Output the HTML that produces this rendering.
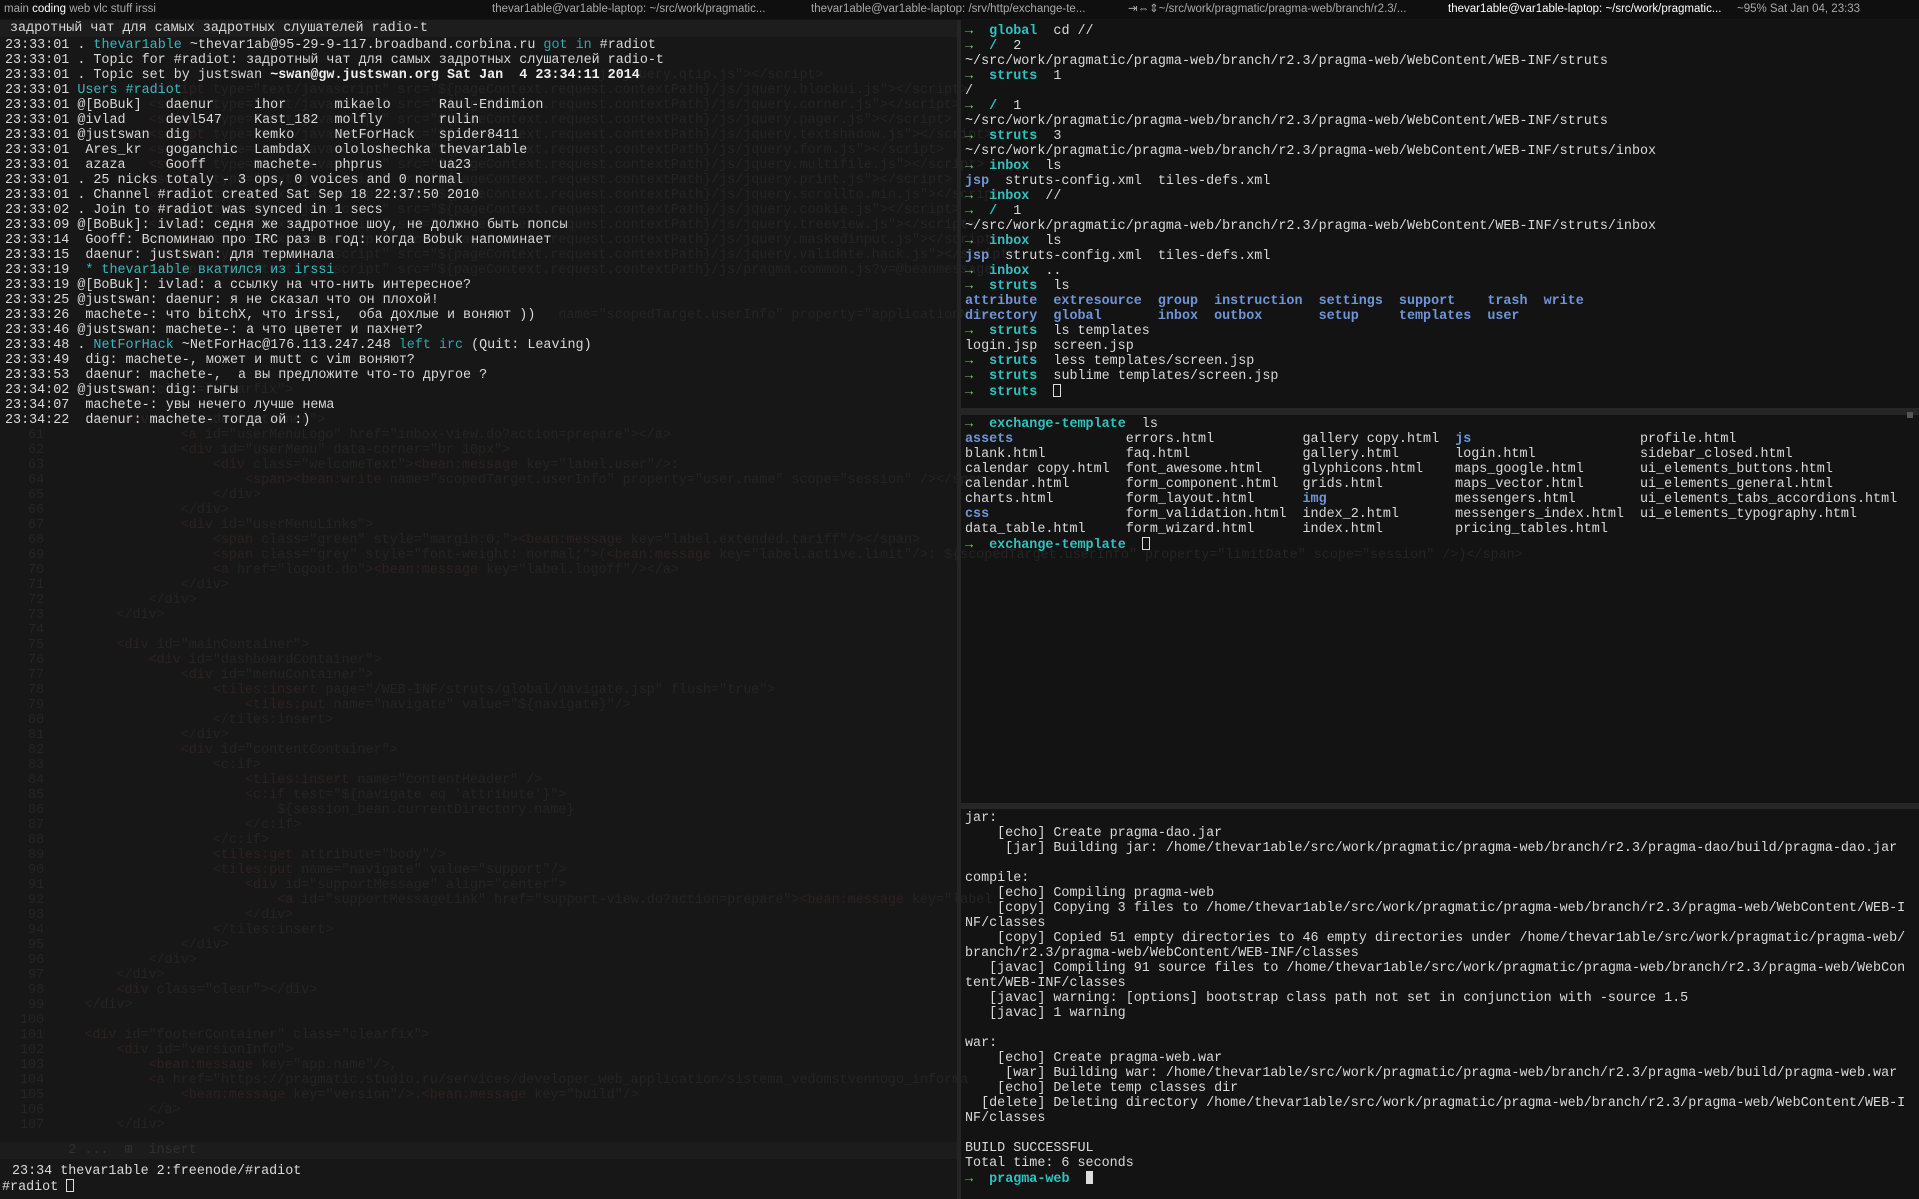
<!DOCTYPE html>
<html><head><meta charset="utf-8">
<style>
*{margin:0;padding:0;box-sizing:border-box}
html,body{width:1919px;height:1199px;overflow:hidden;background:#151515}
body{position:relative;font-family:"Liberation Mono","DejaVu Sans Mono",monospace;font-size:13.4px;line-height:15px;color:#d9d9d9}
pre{font-family:inherit;white-space:pre;position:absolute;margin:0}
#bar{position:absolute;left:0;top:0;width:1919px;height:19px;background:#0f0f0f;font-family:"Liberation Sans",sans-serif;font-size:11.5px;line-height:19px;color:#a8a8a8}
#bar span{position:absolute;top:0}
#left{position:absolute;left:0;top:20px;width:957px;height:1179px;background:#171717}
#right{position:absolute;left:961px;top:20px;width:958px;height:1179px;background:#131313}
.ghost{color:#242424}
.gt{color:#2f2020}
.c{color:#37b7bf}
.t{color:#2ea8a8}
.g{color:#6fd36f}
.d{color:#2fc1c1;font-weight:bold}
.b{color:#7095d6;font-weight:bold}
.w{font-weight:bold;color:#f0f0f0}
.sep{position:absolute;left:961px;width:958px;background:#262626}
.cur{display:inline-block;width:8px;height:13px;border:1px solid #ddd;vertical-align:-2px}
.curf{display:inline-block;width:7px;height:13px;background:#ddd;vertical-align:-2px}
</style></head><body>
<div id="bar">
<span style="left:4px">main <b style="color:#fff;font-weight:normal">coding</b> web vlc stuff irssi</span>
<span style="left:492px">thevar1able@var1able-laptop: ~/src/work/pragmatic...</span>
<span style="left:811px">thevar1able@var1able-laptop: /srv/http/exchange-te...</span>
<span style="left:1128px">⇥⇔⇕~/src/work/pragmatic/pragma-web/branch/r2.3/...</span>
<span style="left:1448px;color:#fff">thevar1able@var1able-laptop: ~/src/work/pragmatic...</span>
<span style="left:1737px">~95% Sat Jan 04, 23:33</span>
</div>
<div id="left"></div>
<div id="right"></div>
<div class="sep" style="top:408px;height:7px"></div>
<div class="sep" style="top:803px;height:6px"></div>
<div style="position:absolute;left:957px;top:20px;width:4px;height:1179px;background:#252525"></div>
<div style="position:absolute;left:1907px;top:412px;width:6px;height:6px;background:#555"></div>

<pre class="ghost" style="left:20px;top:68px">                                                                       /js/jquery.qtip.js"&gt;&lt;/script&gt;
                <span class="gt">&lt;script</span> type="text/javascript" src="${pageContext.request.contextPath}/js/jquery.blockui.js"&gt;&lt;/script&gt;
                <span class="gt">&lt;script</span> type="text/javascript" src="${pageContext.request.contextPath}/js/jquery.corner.js"&gt;&lt;/script&gt;
                <span class="gt">&lt;script</span> type="text/javascript" src="${pageContext.request.contextPath}/js/jquery.pager.js"&gt;&lt;/script&gt;
                <span class="gt">&lt;script</span> type="text/javascript" src="${pageContext.request.contextPath}/js/jquery.textshadow.js"&gt;&lt;/script&gt;
                <span class="gt">&lt;script</span> type="text/javascript" src="${pageContext.request.contextPath}/js/jquery.form.js"&gt;&lt;/script&gt;
                <span class="gt">&lt;script</span> type="text/javascript" src="${pageContext.request.contextPath}/js/jquery.multifile.js"&gt;&lt;/script&gt;
                <span class="gt">&lt;script</span> type="text/javascript" src="${pageContext.request.contextPath}/js/jquery.print.js"&gt;&lt;/script&gt;
                <span class="gt">&lt;script</span> type="text/javascript" src="${pageContext.request.contextPath}/js/jquery.scrollto.min.js"&gt;&lt;/script&gt;
                <span class="gt">&lt;script</span> type="text/javascript" src="${pageContext.request.contextPath}/js/jquery.cookie.js"&gt;&lt;/script&gt;
                <span class="gt">&lt;script</span> type="text/javascript" src="${pageContext.request.contextPath}/js/jquery.treeview.js"&gt;&lt;/script&gt;
                <span class="gt">&lt;script</span> type="text/javascript" src="${pageContext.request.contextPath}/js/jquery.maskedinput.js"&gt;&lt;/script&gt;
                <span class="gt">&lt;script</span> type="text/javascript" src="${pageContext.request.contextPath}/js/jquery.validate.hack.js"&gt;&lt;/script&gt;
                <span class="gt">&lt;script</span> type="text/javascript" src="${pageContext.request.contextPath}/js/pragma.common.js?v=@beanmessage


                                                                   name="scopedTarget.userInfo" property="applicationName




            <span class="gt">&lt;div</span> class="clearfix"&gt;

            <span class="gt">&lt;div</span> id="headerContainer"&gt;
 61                 <span class="gt">&lt;a</span> id="userMenuLogo" href="inbox-view.do?action=prepare"&gt;&lt;/a&gt;
 62                 <span class="gt">&lt;div</span> id="userMenu" data-corner="br 10px"&gt;
 63                     <span class="gt">&lt;div</span> class="welcomeText"&gt;<span class="gt">&lt;bean:message</span> key="label.user"/&gt;:
 64                         <span class="gt">&lt;span&gt;&lt;bean:write</span> name="scopedTarget.userInfo" property="user.name" scope="session" /&gt;&lt;/span&gt;
 65                     &lt;/div&gt;
 66                 &lt;/div&gt;
 67                 <span class="gt">&lt;div</span> id="userMenuLinks"&gt;
 68                     <span class="gt">&lt;span</span> class="green" style="margin:0;"&gt;<span class="gt">&lt;bean:message</span> key="label.extended.tariff"/&gt;&lt;/span&gt;
 69                     <span class="gt">&lt;span</span> class="grey" style="font-weight: normal;"&gt;(<span class="gt">&lt;bean:message</span> key="label.active.limit"/&gt;: ${scopedTarget.userInfo" property="limitDate" scope="session" /&gt;)&lt;/span&gt;
 70                     <span class="gt">&lt;a</span> href="logout.do"&gt;<span class="gt">&lt;bean:message</span> key="label.logoff"/&gt;&lt;/a&gt;
 71                 &lt;/div&gt;
 72             &lt;/div&gt;
 73         &lt;/div&gt;
 74
 75         <span class="gt">&lt;div</span> id="mainContainer"&gt;
 76             <span class="gt">&lt;div</span> id="dashboardContainer"&gt;
 77                 <span class="gt">&lt;div</span> id="menuContainer"&gt;
 78                     <span class="gt">&lt;tiles:insert</span> page="/WEB-INF/struts/global/navigate.jsp" flush="true"&gt;
 79                         <span class="gt">&lt;tiles:put</span> name="navigate" value="${navigate}"/&gt;
 80                     &lt;/tiles:insert&gt;
 81                 &lt;/div&gt;
 82                 <span class="gt">&lt;div</span> id="contentContainer"&gt;
 83                     &lt;c:if&gt;
 84                         <span class="gt">&lt;tiles:insert</span> name="contentHeader" /&gt;
 85                         <span class="gt">&lt;c:if</span> test="${navigate eq 'attribute'}"&gt;
 86                             ${session_bean.currentDirectory.name}
 87                         &lt;/c:if&gt;
 88                     &lt;/c:if&gt;
 89                     <span class="gt">&lt;tiles:get</span> attribute="body"/&gt;
 90                     <span class="gt">&lt;tiles:put</span> name="navigate" value="support"/&gt;
 91                         <span class="gt">&lt;div</span> id="supportMessage" align="center"&gt;
 92                             <span class="gt">&lt;a</span> id="supportMessageLink" href="support-view.do?action=prepare"&gt;<span class="gt">&lt;bean:message</span> key="label
 93                         &lt;/div&gt;
 94                     &lt;/tiles:insert&gt;
 95                 &lt;/div&gt;
 96             &lt;/div&gt;
 97         &lt;/div&gt;
 98         <span class="gt">&lt;div</span> class="clear"&gt;&lt;/div&gt;
 99     &lt;/div&gt;
100
101     <span class="gt">&lt;div</span> id="footerContainer" class="clearfix"&gt;
102         <span class="gt">&lt;div</span> id="versionInfo"&gt;
103             <span class="gt">&lt;bean:message</span> key="app.name"/&gt;,
104             <span class="gt">&lt;a</span> href="https://pragmatic.studio.ru/services/developer_web_application/sistema_vedomstvennogo_informa
105                 <span class="gt">&lt;bean:message</span> key="version"/&gt;.<span class="gt">&lt;bean:message</span> key="build"/&gt;
106             &lt;/a&gt;
107         &lt;/div&gt;</pre>

<div style="position:absolute;left:0;top:20px;width:957px;height:17px;background:#1d1d1d"></div>
<pre style="left:10px;top:21px">задротный чат для самых задротных слушателей radio-t</pre>
<pre style="left:5px;top:38px">23:33:01 . <span class="c">thevar1able</span> ~thevar1ab@95-29-9-117.broadband.corbina.ru <span class="t">got in</span> #radiot
23:33:01 . Topic for #radiot: задротный чат для самых задротных слушателей radio-t
23:33:01 . Topic set by justswan <span class="w">~swan@gw.justswan.org Sat Jan  4 23:34:11 2014</span>
23:33:01 <span class="c">Users #radiot</span>
23:33:01 @[BoBuk]   daenur     ihor      mikaelo      Raul-Endimion
23:33:01 @ivlad     devl547    Kast_182  molfly       rulin
23:33:01 @justswan  dig        kemko     NetForHack   spider8411
23:33:01  Ares_kr   goganchic  LambdaX   ololoshechka thevar1able
23:33:01  azaza     Gooff      machete-  phprus       ua23
23:33:01 . 25 nicks totaly - 3 ops, 0 voices and 0 normal
23:33:01 . Channel #radiot created Sat Sep 18 22:37:50 2010
23:33:02 . Join to #radiot was synced in 1 secs
23:33:09 @[BoBuk]: ivlad: седня же задротное шоу, не должно быть попсы
23:33:14  Gooff: Вспоминаю про IRC раз в год: когда Bobuk напоминает
23:33:15  daenur: justswan: для терминала
23:33:19  <span class="c">* thevar1able вкатился из irssi</span>
23:33:19 @[BoBuk]: ivlad: а ссылку на что-нить интересное?
23:33:25 @justswan: daenur: я не сказал что он плохой!
23:33:26  machete-: что bitchX, что irssi,  оба дохлые и воняют ))
23:33:46 @justswan: machete-: а что цветет и пахнет?
23:33:48 . <span class="c">NetForHack</span> ~NetForHac@176.113.247.248 <span class="t">left irc</span> (Quit: Leaving)
23:33:49  dig: machete-, может и mutt с vim воняют?
23:33:53  daenur: machete-,  а вы предложите что-то другое ?
23:34:02 @justswan: dig: гыгы
23:34:07  machete-: увы нечего лучше нема
23:34:22  daenur: machete- тогда ой :)</pre>

<div style="position:absolute;left:0;top:1142px;width:957px;height:17px;background:#1c1c1c"></div>
<pre class="ghost" style="left:20px;top:1143px;color:#303030">      2 ...  ⊞  insert</pre>
<pre style="left:12px;top:1164px">23:34 thevar1able 2:freenode/#radiot</pre>
<pre style="left:2px;top:1179px">#radiot <span class="cur"></span></pre>

<pre style="left:965px;top:24px"><span class="g">→</span>  <span class="d">global</span>  cd //
<span class="g">→</span>  <span class="d">/</span>  2
~/src/work/pragmatic/pragma-web/branch/r2.3/pragma-web/WebContent/WEB-INF/struts
<span class="g">→</span>  <span class="d">struts</span>  1
/
<span class="g">→</span>  <span class="d">/</span>  1
~/src/work/pragmatic/pragma-web/branch/r2.3/pragma-web/WebContent/WEB-INF/struts
<span class="g">→</span>  <span class="d">struts</span>  3
~/src/work/pragmatic/pragma-web/branch/r2.3/pragma-web/WebContent/WEB-INF/struts/inbox
<span class="g">→</span>  <span class="d">inbox</span>  ls
<span class="b">jsp</span>  struts-config.xml  tiles-defs.xml
<span class="g">→</span>  <span class="d">inbox</span>  //
<span class="g">→</span>  <span class="d">/</span>  1
~/src/work/pragmatic/pragma-web/branch/r2.3/pragma-web/WebContent/WEB-INF/struts/inbox
<span class="g">→</span>  <span class="d">inbox</span>  ls
<span class="b">jsp</span>  struts-config.xml  tiles-defs.xml
<span class="g">→</span>  <span class="d">inbox</span>  ..
<span class="g">→</span>  <span class="d">struts</span>  ls
<span class="b">attribute  extresource  group  instruction  settings  support    trash  write</span>
<span class="b">directory  global       inbox  outbox       setup     templates  user</span>
<span class="g">→</span>  <span class="d">struts</span>  ls templates
login.jsp  screen.jsp
<span class="g">→</span>  <span class="d">struts</span>  less templates/screen.jsp
<span class="g">→</span>  <span class="d">struts</span>  sublime templates/screen.jsp
<span class="g">→</span>  <span class="d">struts</span>  <span class="cur"></span></pre>

<pre style="left:965px;top:417px"><span class="g">→</span>  <span class="d">exchange-template</span>  ls
<span class="b">assets</span>              errors.html           gallery copy.html  <span class="b">js</span>                     profile.html
blank.html          faq.html              gallery.html       login.html             sidebar_closed.html
calendar copy.html  font_awesome.html     glyphicons.html    maps_google.html       ui_elements_buttons.html
calendar.html       form_component.html   grids.html         maps_vector.html       ui_elements_general.html
charts.html         form_layout.html      <span class="b">img</span>                messengers.html        ui_elements_tabs_accordions.html
<span class="b">css</span>                 form_validation.html  index_2.html       messengers_index.html  ui_elements_typography.html
data_table.html     form_wizard.html      index.html         pricing_tables.html
<span class="g">→</span>  <span class="d">exchange-template</span>  <span class="cur"></span></pre>

<pre style="left:965px;top:811px">jar:
    [echo] Create pragma-dao.jar
     [jar] Building jar: /home/thevar1able/src/work/pragmatic/pragma-web/branch/r2.3/pragma-dao/build/pragma-dao.jar

compile:
    [echo] Compiling pragma-web
    [copy] Copying 3 files to /home/thevar1able/src/work/pragmatic/pragma-web/branch/r2.3/pragma-web/WebContent/WEB-I
NF/classes
    [copy] Copied 51 empty directories to 46 empty directories under /home/thevar1able/src/work/pragmatic/pragma-web/
branch/r2.3/pragma-web/WebContent/WEB-INF/classes
   [javac] Compiling 91 source files to /home/thevar1able/src/work/pragmatic/pragma-web/branch/r2.3/pragma-web/WebCon
tent/WEB-INF/classes
   [javac] warning: [options] bootstrap class path not set in conjunction with -source 1.5
   [javac] 1 warning

war:
    [echo] Create pragma-web.war
     [war] Building war: /home/thevar1able/src/work/pragmatic/pragma-web/branch/r2.3/pragma-web/build/pragma-web.war
    [echo] Delete temp classes dir
  [delete] Deleting directory /home/thevar1able/src/work/pragmatic/pragma-web/branch/r2.3/pragma-web/WebContent/WEB-I
NF/classes

BUILD SUCCESSFUL
Total time: 6 seconds
<span class="g">→</span>  <span class="d">pragma-web</span>  <span class="curf"></span></pre>
</body></html>
